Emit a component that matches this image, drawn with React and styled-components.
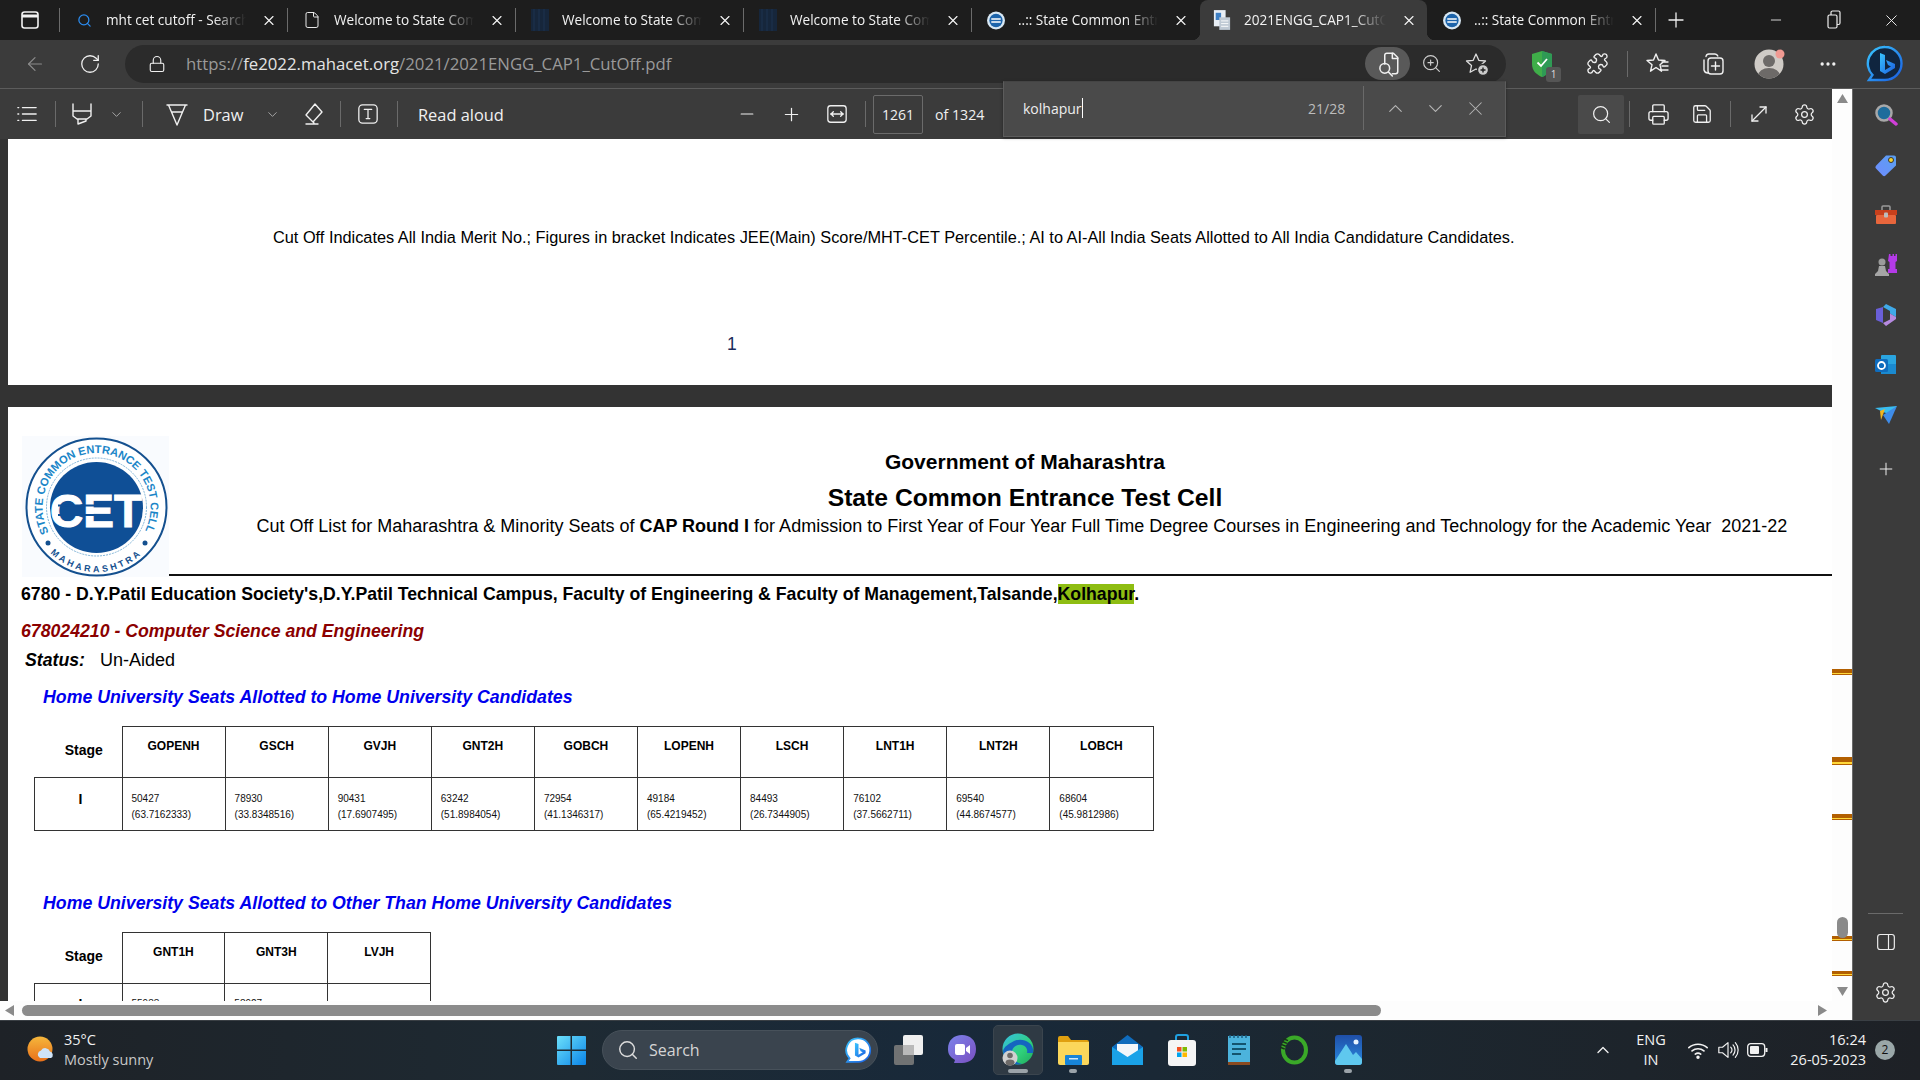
import React from 'react';
import styled, { createGlobalStyle } from 'styled-components';
import { X, Plus, Minus, ArrowLeft, RotateCw, Lock, Search, Printer, Save, MoveDiagonal, Settings, ChevronDown, ChevronUp, ZoomIn, Puzzle, File, Ellipsis } from 'lucide-react';

const GlobalStyle = createGlobalStyle`
  html, body { margin: 0; padding: 0; overflow: hidden; background: #3b3b3b; }
  * { box-sizing: border-box; }
`;

const UI = `"Open Sans", "Noto Sans", sans-serif`;
const PDF = `"Liberation Sans", Arial, sans-serif`;

const Screen = styled.div`
  width: 1920px;
  height: 1080px;
  display: flex;
  flex-direction: column;
  font-family: ${UI};
  color: #eee;
  overflow: hidden;
  position: relative;
`;

/* tab strip */
const TabStrip = styled.div`
  height: 40px;
  flex: none;
  display: flex;
  align-items: center;
  background: #1d1d1d;
`;
const TabSep = styled.div`
  width: 1px;
  height: 24px;
  background: ${(p) => (p.$hide ? 'transparent' : '#6b6b6b')};
  flex: none;
`;
const TabBox = styled.div`
  width: 227px;
  height: 40px;
  flex: none;
  display: flex;
  align-items: center;
  padding: 0 10px 0 ${(p) => (p.$active ? 13 : 15)}px;
  position: relative;
  background: ${(p) => (p.$active ? '#3b3b3b' : 'transparent')};
  border-radius: ${(p) => (p.$active ? '8px 8px 0 0' : '0')};
  &::before, &::after {
    content: ${(p) => (p.$active ? '""' : 'none')};
    position: absolute;
    bottom: 0;
    width: 8px;
    height: 8px;
  }
  &::before { left: -8px; background: radial-gradient(circle at 0 0, transparent 8px, #3b3b3b 8.5px); }
  &::after { right: -8px; background: radial-gradient(circle at 100% 0, transparent 8px, #3b3b3b 8.5px); }
`;
const TabIcon = styled.div`
  width: 18px;
  height: 22px;
  margin-right: 13px;
  display: flex;
  align-items: center;
  justify-content: center;
  flex: none;
`;
const TabLabel = styled.div`
  flex: 1;
  min-width: 0;
  margin-top: -2px;
  font-size: 13.6px;
  white-space: nowrap;
  overflow: hidden;
  color: #f2f2f2;
  -webkit-mask-image: linear-gradient(90deg, #000 72%, transparent 94%);
  mask-image: linear-gradient(90deg, #000 72%, transparent 94%);
`;
const TabClose = styled.div`
  width: 16px;
  margin-left: 6px;
  flex: none;
  display: flex;
  justify-content: center;
  color: #f6f6f6;
`;

/* generic slot that holds one icon at a fixed width */
const Slot = styled.div`
  width: ${(p) => p.$w || 40}px;
  height: ${(p) => p.$h || 36}px;
  margin-left: ${(p) => p.$ml || 0}px;
  flex: none;
  display: flex;
  align-items: center;
  justify-content: center;
  position: relative;
  color: ${(p) => p.$color || '#f0f0f0'};
  background: ${(p) => p.$bg || 'transparent'};
  border-radius: ${(p) => p.$r || 0}px;
`;
const Rule = styled.div`
  width: 1px;
  height: ${(p) => p.$h || 26}px;
  background: #6a6a6a;
  flex: none;
  margin-left: ${(p) => p.$ml || 0}px;
  margin-right: ${(p) => p.$mr || 0}px;
`;
const WindowControls = styled.div`
  margin-left: auto;
  display: flex;
`;

/* address row */
const AddressRow = styled.div`
  height: 49px;
  flex: none;
  display: flex;
  align-items: center;
  padding: 0 0 1px 15px;
  background: #3b3b3b;
  border-bottom: 1px solid #5c5c5c;
`;
const UrlPill = styled.div`
  width: 1381px;
  height: 38px;
  margin-left: 15px;
  flex: none;
  border-radius: 19px;
  background: #2b2b2b;
  display: flex;
  align-items: center;
  padding: 0 11px 0 22px;
`;
const UrlText = styled.div`
  margin-left: 19px;
  font-size: 16.75px;
  color: #9a9a9a;
  white-space: nowrap;
  b { font-weight: 400; color: #e4e4e4; }
`;
const PillIcons = styled.div`
  margin-left: auto;
  display: flex;
  align-items: center;
`;
const ShieldBadge = styled.div`
  position: absolute;
  left: 24px;
  top: 21px;
  width: 15px;
  height: 15px;
  border-radius: 3px;
  background: #555;
  color: #ddd;
  font-size: 10px;
  line-height: 15px;
  text-align: center;
`;

/* workspace */
const Workspace = styled.div`
  flex: 1;
  min-height: 0;
  display: flex;
`;
const ViewerArea = styled.div`
  flex: 1;
  min-width: 0;
  display: flex;
  flex-direction: column;
`;
const ViewerMain = styled.div`
  flex: 1;
  min-height: 0;
  display: flex;
`;
const PdfColumn = styled.div`
  flex: 1;
  min-width: 0;
  display: flex;
  flex-direction: column;
  position: relative;
`;
const Toolbar = styled.div`
  height: 50px;
  flex: none;
  display: flex;
  align-items: center;
  background: #3b3b3b;
  padding: 0 8px 0 7px;
`;
const ToolGroup = styled.div`
  display: flex;
  align-items: center;
  width: ${(p) => (p.$w ? `${p.$w}px` : 'auto')};
  margin-left: ${(p) => (p.$auto ? 'auto' : '0')};
`;
const ToolText = styled.div`
  font-size: ${(p) => p.$fs || 16.4}px;
  color: #f0f0f0;
  white-space: nowrap;
  margin-left: ${(p) => p.$ml || 0}px;
  width: ${(p) => (p.$w ? `${p.$w}px` : 'auto')};
`;
const PageInput = styled.div`
  width: 50px;
  height: 39px;
  margin-left: 7px;
  border: 1px solid #6b6b6b;
  border-radius: 2px;
  font-size: 14px;
  line-height: 37px;
  text-align: center;
  color: #f0f0f0;
`;
const FindBar = styled.div`
  position: absolute;
  left: 1003px;
  top: -8px;
  width: 503px;
  height: 56px;
  background: #4a4a4a;
  border: 1px solid #5c5c5c;
  border-top: 1px solid #444;
  box-shadow: 0 1px 3px rgba(0, 0, 0, 0.4);
  display: flex;
  align-items: center;
  padding: 0 0 2px 19px;
  z-index: 3;
`;
const FindInput = styled.div`
  width: 285px;
  font-size: 14px;
  color: #eee;
  display: flex;
  align-items: center;
`;
const Caret = styled.span`
  width: 1px;
  height: 20px;
  background: #fff;
  display: inline-block;
`;
const FindCount = styled.div`
  width: 55px;
  font-size: 14px;
  color: #bdbdbd;
  text-align: left;
`;

/* pages */
const Pages = styled.div`
  flex: 1;
  min-height: 0;
  overflow: hidden;
  background: #333;
  padding-left: 8px;
  font-family: ${PDF};
  color: #000;
`;
const Sheet = styled.div`
  background: #fff;
  padding-top: ${(p) => p.$pt || 0}px;
  height: ${(p) => (p.$h ? `${p.$h}px` : 'auto')};
  margin-bottom: ${(p) => p.$mb || 0}px;
`;
const Footnote = styled.div`
  margin-left: 265px;
  font-size: 16.32px;
  line-height: 22px;
  white-space: nowrap;
`;
const PageNum = styled.div`
  margin: 85px 0 0 719px;
  font-size: 17.5px;
  line-height: 22px;
  color: #1a2a5a;
`;
const HeadRow = styled.div`
  display: flex;
  margin-left: 14px;
  height: 141px;
`;
const LogoBox = styled.div`
  width: 147px;
  height: 141px;
  flex: none;
  background: #f9fbfe;
`;
const HeadText = styled.div`
  flex: 1;
  height: 140px;
  border-bottom: 2px solid #111;
  padding-left: 49px;
  text-align: center;
  padding-top: 14px;
`;
const GovLine = styled.div`
  font-size: 21px;
  font-weight: 700;
  line-height: 24px;
`;
const CellLine = styled.div`
  margin-top: 10px;
  font-size: 24.7px;
  font-weight: 700;
  line-height: 28px;
`;
const ListLine = styled.div`
  margin-top: 3px;
  padding-right: 6px;
  font-size: 18px;
  line-height: 22px;
  white-space: nowrap;
`;
const CollegeLine = styled.div`
  margin: 6px 0 0 13px;
  font-size: 17.69px;
  font-weight: 700;
  line-height: 22px;
  white-space: nowrap;
  mark { background: #8ebd12; color: #000; }
`;
const BranchLine = styled.div`
  margin: 15px 0 0 13px;
  font-size: 17.69px;
  font-weight: 700;
  font-style: italic;
  line-height: 22px;
  color: #8b0000;
`;
const StatusLine = styled.div`
  margin: 7px 0 0 17px;
  font-size: 18px;
  line-height: 22px;
  display: flex;
  b { font-size: 17.7px; font-style: italic; width: 75px; }
`;
const SeatHeading = styled.div`
  margin: ${(p) => p.$mt}px 0 0 35px;
  font-size: 17.74px;
  font-weight: 700;
  font-style: italic;
  line-height: 22px;
  color: #0000ee;
  white-space: nowrap;
`;
const CutTable = styled.table`
  margin: 18px 0 0 25.5px;
  border-collapse: collapse;
  table-layout: fixed;
  width: ${(p) => 88 + p.$cols * 103.2}px;
`;
const StageHead = styled.th`
  width: 88px;
  height: 51px;
  padding: 13px 0 0 12px;
  vertical-align: top;
  font-size: 14px;
  line-height: 20px;
  font-weight: 700;
  border-bottom: 1px solid #333;
  text-align: center;
`;
const ColHead = styled.th`
  border: 1px solid #333;
  padding: 12px 0 0;
  vertical-align: top;
  font-size: 12px;
  line-height: 14px;
  font-weight: 700;
  text-align: center;
`;
const StageCell = styled.td`
  height: 53px;
  border: 1px solid #333;
  padding: ${(p) => p.$pt}px 0 0 5px;
  vertical-align: top;
  font-size: 14px;
  font-weight: 700;
  line-height: 18px;
  text-align: center;
`;
const ValueCell = styled.td`
  border: 1px solid #333;
  padding: ${(p) => p.$pt}px 0 0 9px;
  vertical-align: top;
  font-size: 10px;
  line-height: 16px;
  color: #111;
`;

/* scroll bars */
const VScroll = styled.div`
  width: 20px;
  flex: none;
  position: relative;
  background: #fdfdfd;
`;
const ScrollMark = styled.div`
  position: absolute;
  left: 0;
  right: 0;
  top: ${(p) => p.$top}px;
  height: ${(p) => p.$h}px;
  background: linear-gradient(#b25f00 0 66%, #ffd83a 66% 84%, #b25f00 84%);
`;
const VThumb = styled.div`
  position: absolute;
  left: 5px;
  width: 11px;
  top: 828px;
  height: 21px;
  border-radius: 6px;
  background: #8a8a8a;
`;
const ArrowAt = styled.svg`
  position: absolute;
  left: ${(p) => p.$x}px;
  top: ${(p) => p.$y}px;
`;
const HScroll = styled.div`
  height: 19px;
  flex: none;
  background: #fdfdfd;
  display: flex;
  align-items: center;
  padding: 0 25px 0 5px;
`;
const HThumb = styled.div`
  width: 1359px;
  height: 11px;
  margin-left: 8px;
  margin-right: auto;
  border-radius: 6px;
  background: #8b8b8b;
`;

/* edge sidebar */
const Sidebar = styled.div`
  width: 68px;
  flex: none;
  display: flex;
  flex-direction: column;
  align-items: center;
  background: #3b3b3b;
  border-left: 1px solid #6a6a6a;
  padding: 1px 2px 3px 0;
`;
const SideItem = styled.div`
  width: 100%;
  height: 50px;
  margin-top: ${(p) => p.$mt || 0}px;
  flex: none;
  display: flex;
  align-items: center;
  justify-content: center;
  color: #eee;
`;
const SideBottom = styled.div`
  margin-top: auto;
  width: 100%;
  display: flex;
  flex-direction: column;
  align-items: center;
`;
const SideLine = styled.div`
  width: 35px;
  height: 1px;
  background: #6a6a6a;
  margin-bottom: 3px;
`;

/* taskbar */
const Taskbar = styled.div`
  height: 60px;
  flex: none;
  display: flex;
  align-items: center;
  padding-bottom: 1px;
  background: linear-gradient(90deg, #1e2227 0%, #1e2a33 30%, #18293a 50%, #1c2730 70%, #1e2126 100%);
  border-top: 1px solid #3a3f44;
`;
const Weather = styled.div`
  width: 557px;
  flex: none;
  display: flex;
  align-items: center;
  padding-left: 27px;
`;
const WeatherText = styled.div`
  margin-left: 9px;
  font-size: 14.5px;
  line-height: 20px;
  color: #f2f2f2;
  span { display: block; color: #c8c8c8; }
`;
const SearchPill = styled.div`
  width: 276px;
  height: 40px;
  margin-left: 16px;
  flex: none;
  border-radius: 20px;
  background: #3a444e;
  border: 1px solid #47515a;
  display: flex;
  align-items: center;
  padding: 0 5px 0 14px;
  color: #ddd;
`;
const SearchWord = styled.div`
  margin-left: 10px;
  font-size: 16px;
  color: #d5d5d5;
  flex: 1;
`;
const TaskSlot = styled.div`
  width: 50px;
  height: 50px;
  margin-left: ${(p) => p.$ml || 0}px;
  flex: none;
  display: flex;
  align-items: center;
  justify-content: center;
  position: relative;
  border-radius: 5px;
  background: ${(p) => (p.$active ? '#2f3a44' : 'transparent')};
  border: 1px solid ${(p) => (p.$active ? '#3b454e' : 'transparent')};
`;
const RunDot = styled.div`
  position: absolute;
  left: 50%;
  transform: translateX(-50%);
  bottom: 1px;
  width: ${(p) => (p.$wide ? 20 : 8)}px;
  height: 4px;
  border-radius: 2px;
  background: #9ba3a9;
`;
const Tray = styled.div`
  margin-left: auto;
  padding-right: 25px;
  display: flex;
  align-items: center;
  color: #f2f2f2;
`;
const LangBox = styled.div`
  width: 40px;
  margin-left: 15px;
  text-align: center;
  font-size: 14.5px;
  line-height: 20px;
`;
const ClockBox = styled.div`
  width: 90px;
  margin-left: 6px;
  text-align: right;
  font-size: 14.5px;
  line-height: 20px;
`;
const NotifyBadge = styled.div`
  width: 20px;
  height: 20px;
  margin-left: 9px;
  border-radius: 50%;
  background: #9aa7a8;
  color: #111;
  font-size: 12px;
  line-height: 20px;
  text-align: center;
`;

/* drawn icons */
const Svg = ({ s = 22, children, ...rest }) => (
  <svg width={s} height={s} viewBox="0 0 24 24" fill="none" stroke="currentColor" strokeWidth="1.4" strokeLinecap="round" strokeLinejoin="round" {...rest}>
    {children}
  </svg>
);
const WindowIcon = () => (
  <svg width="18" height="18" viewBox="0 0 18 18" fill="none" stroke="#f2f2f2" strokeWidth="1.6">
    <rect x="1" y="1" width="16" height="16" rx="2.5" />
    <path d="M1 5h16" strokeWidth="3" />
  </svg>
);
const RestoreIcon = () => (
  <svg width="14" height="20" viewBox="0 0 14 20" fill="none" stroke="#eee" strokeWidth="1.2">
    <rect x="1" y="5" width="9" height="13" rx="1.5" />
    <path d="M4 5V2.5A1.5 1.5 0 0 1 5.5 1H11.5A1.5 1.5 0 0 1 13 2.5V13a1.5 1.5 0 0 1-1.5 1.5H10" />
  </svg>
);
const Thumb = () => (
  <svg width="18" height="22" viewBox="0 0 18 22">
    <rect width="18" height="22" fill="#16263b" />
    <path d="M3 0v22M8 0v22M13 0v22" stroke="#1c3350" strokeWidth="1" />
  </svg>
);
const CetFav = () => (
  <svg width="19" height="19" viewBox="0 0 19 19">
    <circle cx="9.5" cy="9.5" r="9.5" fill="#d8e8f4" />
    <circle cx="9.5" cy="9.5" r="7" fill="#1c64ab" />
    <path d="M4.5 8h10M4.5 11h10" stroke="#fff" strokeWidth="1.6" />
  </svg>
);
const PdfFav = () => (
  <svg width="20" height="22" viewBox="0 0 20 22">
    <rect x="1" y="0" width="13" height="18" fill="#e8eef5" />
    <rect x="3" y="3" width="6" height="8" fill="#3d7fc4" />
    <rect x="7" y="8" width="12" height="14" fill="#bfc9d4" />
    <path d="M9 12h8M9 15h8M9 18h8" stroke="#fff" />
  </svg>
);
const Highlighter = () => (
  <Svg s={24}>
    <path d="M3 2v7h18V2M3 9v5l4 3h10l4-3V9M8 17v5l8-3v-2" />
  </Svg>
);
const DrawPen = () => (
  <Svg s={24}>
    <path d="M2 3h20M3.500 3 12 23l8.500-20M6.500 10h11" />
  </Svg>
);
const EraserIcon = () => (
  <Svg s={24}>
    <path d="M14 2l7 8-9 10-7-7zM7 15l6 6M5 22h12" />
  </Svg>
);
const TextBox = () => (
  <Svg s={22}>
    <rect x="2" y="2" width="20" height="20" rx="4" />
    <path d="M8 7h8M12 7v10M10 17h4" />
  </Svg>
);
const ListIcon = () => (
  <Svg s={22}>
    <path d="M7 5h15M7 12h15M7 19h15M2 5h1M2 12h1M2 19h1" />
  </Svg>
);
const FitWidth = () => (
  <Svg s={22}>
    <rect x="2" y="3" width="20" height="18" rx="3" />
    <path d="M5 12h14M8 9.5 5.5 12 8 14.5M16 9.5l2.5 2.5-2.5 2.5" />
  </Svg>
);
const ReaderIcon = () => (
  <Svg s={26}>
    <path d="M9 12V4a2 2 0 0 1 2-2h6l4 4v13a2 2 0 0 1-2 2h-3" />
    <path d="M16 2v5h5" />
    <circle cx="9" cy="16" r="4.5" />
    <path d="M12.5 19.5 16 23" />
  </Svg>
);
const StarPlus = () => (
  <svg width="24" height="24" viewBox="0 0 24 24" fill="none" stroke="#ddd" strokeWidth="1.3" strokeLinejoin="round">
    <path d="M11 2l2.8 6.3 6.7.7-5 4.6 1.4 6.7L11 17l-5.900 3.300 1.400-6.700L1.500 9l6.700-.7z" />
    <circle cx="18" cy="18" r="5.500" fill="#ccc" stroke="#2b2b2b" />
    <path d="M18 15.500v5M15.500 18h5" stroke="#222" strokeWidth="1.400" />
  </svg>
);
const FavList = () => (
  <Svg s={24}>
    <path d="M10 2l2.500 6 6.500.5-5 4.300 1.500 6.400L10 15.500l-5.500 3.700L6 12.800 1 8.500 7.500 8zM16 10h6M16 14h6M16 18h6" />
  </Svg>
);
const Collections = () => (
  <Svg s={24}>
    <path d="M5 4.500A3 3 0 0 1 8 2h6a3 3 0 0 1 2.800 2M3 8v10a4 4 0 0 0 4 3" />
    <rect x="7" y="6" width="15" height="16" rx="3" />
    <path d="M14.500 10v8M10.500 14h8" />
  </Svg>
);
const Shield = () => (
  <svg width="24" height="28" viewBox="0 0 24 28">
    <path d="M12 1 22 4v10c0 7-5 11-10 13C7 25 2 21 2 14V4z" fill="#3fae49" />
    <path d="M12 1 22 4v10c0 7-5 11-10 13z" fill="#2f9a55" />
    <path d="M7.500 12.500 11 16l6-7" stroke="#fff" strokeWidth="1.800" fill="none" />
  </svg>
);
const Avatar = () => (
  <svg width="34" height="30" viewBox="0 0 34 30">
    <defs><clipPath id="ava"><circle cx="16" cy="15" r="14.500" /></clipPath></defs>
    <circle cx="16" cy="15" r="14.500" fill="#cfcbc6" />
    <g clipPath="url(#ava)">
      <circle cx="16" cy="12" r="6" fill="#6d6a68" />
      <ellipse cx="16" cy="27" rx="11" ry="8" fill="#6d6a68" />
    </g>
    <circle cx="27" cy="5" r="4.500" fill="#f09a92" />
  </svg>
);
const BingBubble = ({ s = 38 }) => (
  <svg width={s} height={s} viewBox="0 0 38 38">
    <defs>
      <linearGradient id={`bb${s}`} x1="0" y1="0" x2="1" y2="1">
        <stop offset="0" stopColor="#39c5ff" />
        <stop offset="1" stopColor="#1a5de0" />
      </linearGradient>
    </defs>
    <path d="M19 2a16.500 16.500 0 0 1 0 33H3l3.500-5A16.500 16.500 0 0 1 19 2z" fill={s < 30 ? '#fff' : '#10253f'} stroke={`url(#bb${s})`} strokeWidth="2.400" />
    <path d="M14 8l5 2v15l6-3.500-3-1.500-2-5 9 4v4l-10 6-5-3z" fill={`url(#bb${s})`} />
  </svg>
);
const PanelIcon = () => (
  <Svg s={20}>
    <rect x="2" y="3" width="20" height="18" rx="3" />
    <path d="M15 3v18" />
  </Svg>
);

const Tag = () => (
  <svg width="24" height="24" viewBox="0 0 24 24">
    <defs><linearGradient id="tg" x1="0" y1="1" x2="1" y2="0"><stop offset="0" stopColor="#6f8cff" /><stop offset="1" stopColor="#5aa0f0" /></linearGradient></defs>
    <path d="M12 2.500h8a2 2 0 0 1 2 2v8L11.500 22.500a2 2 0 0 1-2.800 0L2 15.500a2 2 0 0 1 0-2.800z" fill="url(#tg)" />
    <circle cx="17" cy="7" r="2.500" fill="#f4d32c" stroke="#333" />
  </svg>
);
const Toolbox = () => (
  <svg width="24" height="22" viewBox="0 0 24 22">
    <path d="M8 6V3a1 1 0 0 1 1-1h6a1 1 0 0 1 1 1v3" stroke="#9a9a9a" strokeWidth="1.500" fill="none" />
    <rect x="1" y="6" width="22" height="5" fill="#c8401c" />
    <rect x="2" y="11" width="20" height="9" rx="1" fill="#e8663c" />
    <rect x="10" y="8.500" width="4" height="5" rx="1" fill="#bdbdbd" />
  </svg>
);
const Chess = () => (
  <svg width="24" height="24" viewBox="0 0 24 24">
    <path d="M16 2h1.500v2h2V2H21v2h1.500V2H24v7l-1.500 1v7H24v4h-9v-4h1.500v-7L15 9z" fill="#b43ae8" transform="translate(-1 -1)" />
    <circle cx="8" cy="9" r="3.500" fill="#9b9b9b" />
    <path d="M5 13h6l1 5 3 3v2H1v-2l3-3z" fill="#a5a5a5" />
  </svg>
);
const M365 = () => (
  <svg width="22" height="24" viewBox="0 0 22 24">
    <path d="M11 1 21 6v8l-6-3.500V8L8 4z" fill="#3fa9e8" />
    <path d="M1 6l7-2v16l-7-3z" fill="#6a5fd8" />
    <path d="M8 20l7-3.500v-6l6 3.500v2l-10 7z" fill="#b68ae0" />
  </svg>
);
const Outlook = () => (
  <svg width="24" height="24" viewBox="0 0 24 24">
    <rect x="7" y="2" width="15" height="19" rx="1" fill="#2aa5e0" />
    <path d="M7 11l15 0v10H7z" fill="#1a8ad0" />
    <rect x="1" y="6" width="13" height="13" rx="1.500" fill="#0f6cbd" />
    <circle cx="7.500" cy="12.500" r="3.500" fill="none" stroke="#fff" strokeWidth="1.800" />
  </svg>
);
const Paper = () => (
  <svg width="24" height="20" viewBox="0 0 24 20">
    <path d="M1 3l22-2-8 8-6-2z" fill="#39bdf0" />
    <path d="M23 1 15 19l-6-9z" fill="#3f8ce8" />
    <path d="M6 6l5-2-4 11z" fill="#f2b61f" />
  </svg>
);

const CetLogo = () => (
  <svg width="147" height="141" viewBox="0 0 147 141">
    <defs>
      <path id="arcTop" d="M26.8 96.4 A54 54 0 1 1 122.2 96.4" />
      <path id="arcBot" d="M28.5 117 A65 65 0 0 0 120.5 117" />
    </defs>
    <ellipse cx="74.5" cy="71" rx="70" ry="68.500" fill="#fff" stroke="#14508f" strokeWidth="2" />
    <ellipse cx="74.5" cy="71" rx="50" ry="49" fill="none" stroke="#7fb4d8" strokeWidth="1" strokeDasharray="2 1" />
    <text fontFamily={PDF} fontSize="11.2" fontWeight="700" fill="#1b86c8">
      <textPath href="#arcTop">STATE COMMON ENTRANCE TEST CELL</textPath>
    </text>
    <text fontFamily={PDF} fontSize="9" fontWeight="700" fill="#14508f" letterSpacing="2.8">
      <textPath href="#arcBot">MAHARASHTRA</textPath>
    </text>
    <circle cx="26" cy="107" r="2.500" fill="#14508f" />
    <circle cx="123" cy="107" r="2.500" fill="#14508f" />
    <ellipse cx="74.5" cy="71.500" rx="46.500" ry="45.500" fill="#0f4f96" />
    <text x="74" y="91" textAnchor="middle" fontFamily={PDF} fontSize="46" fontWeight="700" fill="#fff" stroke="#fff" strokeWidth="1">CET</text>
    <path d="M36 69.500h44M36 79h44" stroke="#0f4f96" strokeWidth="2" />
  </svg>
);

/* taskbar glyphs */
const WinLogo = () => (
  <svg width="29" height="29" viewBox="0 0 29 29">
    <defs><linearGradient id="wl" x1="0" y1="0" x2="1" y2="1"><stop offset="0" stopColor="#6ce0fa" /><stop offset="1" stopColor="#0a84e8" /></linearGradient></defs>
    <path d="M0 1a1 1 0 0 1 1-1h12.500v13.500H0zM15 0h13a1 1 0 0 1 1 1v12.500H15zM0 15h13.500v14H1a1 1 0 0 1-1-1zM15 15h14v13a1 1 0 0 1-1 1H15z" fill="url(#wl)" />
  </svg>
);
const WeatherIcon = () => (
  <svg width="28" height="28" viewBox="0 0 28 28">
    <defs><linearGradient id="sun" x1="0" y1="0" x2="0" y2="1"><stop offset="0" stopColor="#f6b73c" /><stop offset="1" stopColor="#e8701a" /></linearGradient></defs>
    <circle cx="13" cy="13" r="12.500" fill="url(#sun)" />
    <path d="M13 22a4 4 0 0 1 1-7.500 5 5 0 0 1 9 1 3.500 3.500 0 0 1 1 6.500z" fill="#cfe3f7" />
  </svg>
);
const TaskView = () => (
  <svg width="31" height="32" viewBox="0 0 31 32">
    <rect x="10" y="1" width="20" height="20" rx="2" fill="#efefef" />
    <rect x="1" y="11" width="20" height="20" rx="2" fill="#7a7a7a" opacity="0.900" />
    <rect x="10" y="11" width="11" height="10" fill="#b9b9b9" />
  </svg>
);
const Teams = () => (
  <svg width="30" height="32" viewBox="0 0 30 32">
    <defs><linearGradient id="tm" x1="0" y1="0" x2="1" y2="1"><stop offset="0" stopColor="#7b83eb" /><stop offset="1" stopColor="#7a4fc0" /></linearGradient></defs>
    <path d="M15 1c8 0 14 5 14 14s-6 14-14 14H7l1-3C3 23 1 20 1 15 1 6 7 1 15 1z" fill="url(#tm)" />
    <rect x="8" y="10" width="10" height="11" rx="2" fill="#fff" />
    <path d="M19 14l4-3v9l-4-3z" fill="#fff" />
  </svg>
);
const EdgeLogo = () => (
  <svg width="32" height="34" viewBox="0 0 32 34">
    <defs>
      <linearGradient id="ed" x1="0" y1="0" x2="1" y2="1"><stop offset="0" stopColor="#36c0e8" /><stop offset="0.600" stopColor="#2fd07a" /><stop offset="1" stopColor="#1fa85c" /></linearGradient>
    </defs>
    <circle cx="16" cy="16" r="15.500" fill="url(#ed)" />
    <path d="M1 18C2 29 12 33 20 31c-6-1-11-6-10-13 1-5 6-7 10-6 4 1 6 4 5 8h6C33 9 20 4 12 8 6 11 2 14 1 18z" fill="#1565c0" />
    <circle cx="8" cy="25" r="7.500" fill="#d0d0d0" />
    <circle cx="8" cy="22.500" r="2.800" fill="#6d6a68" />
    <ellipse cx="8" cy="29.500" rx="4.500" ry="3" fill="#6d6a68" />
  </svg>
);
const Folder = () => (
  <svg width="31" height="30" viewBox="0 0 31 30">
    <path d="M0 3a2 2 0 0 1 2-2h8l3 4h16a2 2 0 0 1 2 2v3H0z" fill="#e0a010" />
    <path d="M0 7h31v21a2 2 0 0 1-2 2H2a2 2 0 0 1-2-2z" fill="#fbd75b" />
    <rect x="7" y="20" width="17" height="10" rx="1" fill="#1784d8" />
    <rect x="11" y="23" width="9" height="1.500" fill="#cde8fb" />
  </svg>
);
const Mail = () => (
  <svg width="31" height="30" viewBox="0 0 31 30">
    <path d="M0 12 15.500 0 31 12v18H0z" fill="#0f6cbd" />
    <path d="M5 9h21v8l-10.500 7L5 17z" fill="#f2f6fa" />
    <path d="M0 12l15.500 10L31 12v18H0z" fill="#1aa2e8" />
  </svg>
);
const Store = () => (
  <svg width="30" height="32" viewBox="0 0 30 32">
    <path d="M9 6V3a2 2 0 0 1 2-2h8a2 2 0 0 1 2 2v3" stroke="#1fa0e0" strokeWidth="2" fill="none" />
    <rect x="1" y="6" width="28" height="26" rx="3" fill="#f5f5f5" />
    <rect x="10" y="13" width="4.500" height="4.500" fill="#f25022" />
    <rect x="15.500" y="13" width="4.500" height="4.500" fill="#7fba00" />
    <rect x="10" y="18.500" width="4.500" height="4.500" fill="#00a4ef" />
    <rect x="15.500" y="18.500" width="4.500" height="4.500" fill="#ffb900" />
  </svg>
);
const Notepad = () => (
  <svg width="22" height="30" viewBox="0 0 22 30">
    <rect x="0" y="1" width="22" height="29" fill="#4cb3dc" />
    <rect x="0" y="27" width="22" height="3" fill="#8a4a20" />
    <path d="M2 0v3M6 0v3M10 0v3M14 0v3M18 0v3" stroke="#1a5e80" strokeWidth="1.500" />
    <path d="M4 9h14M4 14h14M4 19h9" stroke="#14546e" strokeWidth="2" />
  </svg>
);
const Ring = () => (
  <svg width="29" height="30" viewBox="0 0 29 30">
    <ellipse cx="14.500" cy="15" rx="11.500" ry="12.500" fill="none" stroke="#3aa928" strokeWidth="4" />
    <path d="M6 4 2 14" stroke="#17301a" strokeWidth="5" strokeDasharray="1.500 1.500" />
  </svg>
);
const Photos = () => (
  <svg width="27" height="30" viewBox="0 0 27 30">
    <defs><linearGradient id="ph" x1="0" y1="0" x2="0" y2="1"><stop offset="0" stopColor="#1f4fa8" /><stop offset="1" stopColor="#2a8ae0" /></linearGradient></defs>
    <rect width="27" height="30" rx="3" fill="url(#ph)" />
    <circle cx="21" cy="7" r="2.500" fill="#e6f3ff" />
    <path d="M0 26 11 9l7 11 3-3 6 7v3a3 3 0 0 1-3 3H3a3 3 0 0 1-3-3z" fill="#5fc8ee" />
  </svg>
);
const Wifi = () => (
  <Svg s={22} strokeWidth="1.800" color="#f2f2f2">
    <path d="M2 9.500a15 15 0 0 1 20 0M5.500 13a10 10 0 0 1 13 0M9 16.500a5 5 0 0 1 6 0" />
    <circle cx="12" cy="20" r="1" fill="currentColor" />
  </Svg>
);
const Speaker = () => (
  <Svg s={22} strokeWidth="1.300" color="#f2f2f2">
    <path d="M2 9v6h4l6 5V4L6 9zM15 9a4 4 0 0 1 0 6M17.500 6.500a8 8 0 0 1 0 11M20 4a12 12 0 0 1 0 16" />
  </Svg>
);
const Battery = () => (
  <svg width="21" height="14" viewBox="0 0 21 14">
    <rect x="0.700" y="0.700" width="17" height="12.600" rx="3" fill="none" stroke="#f2f2f2" strokeWidth="1.300" />
    <rect x="3" y="3" width="9" height="8" rx="1" fill="#f2f2f2" />
    <rect x="18.500" y="5" width="2" height="4" fill="#f2f2f2" />
  </svg>
);

const tabs = [
  { icon: <Search size={15} color="#2b8cf0" strokeWidth={2} />, label: 'mht cet cutoff - Search' },
  { icon: <File size={20} color="#f0f0f0" strokeWidth={1.3} />, label: 'Welcome to State Common' },
  { icon: <Thumb />, label: 'Welcome to State Common' },
  { icon: <Thumb />, label: 'Welcome to State Common' },
  { icon: <CetFav />, label: '..:: State Common Entrance' },
  { icon: <PdfFav />, label: '2021ENGG_CAP1_CutOff.pdf', active: true },
  { icon: <CetFav />, label: '..:: State Common Entrance' },
];

const homeCols = [
  ['GOPENH', '50427', '(63.7162333)'],
  ['GSCH', '78930', '(33.8348516)'],
  ['GVJH', '90431', '(17.6907495)'],
  ['GNT2H', '63242', '(51.8984054)'],
  ['GOBCH', '72954', '(41.1346317)'],
  ['LOPENH', '49184', '(65.4219452)'],
  ['LSCH', '84493', '(26.7344905)'],
  ['LNT1H', '76102', '(37.5662711)'],
  ['LNT2H', '69540', '(44.8674577)'],
  ['LOBCH', '68604', '(45.9812986)'],
];
const otherCols = [
  ['GNT1H', '55933', '(58.2310448)'],
  ['GNT3H', '58927', '(55.9021733)'],
  ['LVJH', '', ''],
];
const marks = [
  [580, 6],
  [668, 8],
  [725, 6],
  [847, 5],
  [882, 5],
];

function Cutoffs({ cols, valueTop = 13 }) {
  return (
    <CutTable $cols={cols.length}>
      <thead>
        <tr>
          <StageHead>Stage</StageHead>
          {cols.map((c) => <ColHead key={c[0]}>{c[0]}</ColHead>)}
        </tr>
      </thead>
      <tbody>
        <tr>
          <StageCell $pt={valueTop - 1}>I</StageCell>
          {cols.map((c) => (
            <ValueCell key={c[0]} $pt={valueTop}>{c[1]}<br />{c[2]}</ValueCell>
          ))}
        </tr>
      </tbody>
    </CutTable>
  );
}

export default function App() {
  return (
    <Screen>
      <GlobalStyle />
      <TabStrip>
        <Slot $w={59}><WindowIcon /></Slot>
        <TabSep />
        {tabs.map((t, i) => (
          <React.Fragment key={i}>
            <TabBox $active={t.active}>
              <TabIcon>{t.icon}</TabIcon>
              <TabLabel>{t.label}</TabLabel>
              <TabClose><X size={17} strokeWidth={1.7} /></TabClose>
            </TabBox>
            <TabSep $hide={i === 4 || i === 5} />
          </React.Fragment>
        ))}
        <Slot $w={40}><Plus size={24} strokeWidth={1.3} /></Slot>
        <WindowControls>
          <Slot $w={57.5}><Minus size={16} strokeWidth={1.3} /></Slot>
          <Slot $w={57.5}><RestoreIcon /></Slot>
          <Slot $w={57.5}><X size={19} strokeWidth={1.2} /></Slot>
        </WindowControls>
      </TabStrip>

      <AddressRow>
        <Slot $color="#8c8c8c"><ArrowLeft size={22} strokeWidth={1.3} /></Slot>
        <Slot $ml={15}><RotateCw size={22} strokeWidth={1.4} /></Slot>
        <UrlPill>
          <Slot $w={20}><Lock size={18} strokeWidth={1.5} /></Slot>
          <UrlText>https://<b>fe2022.mahacet.org</b>/2021/2021ENGG_CAP1_CutOff.pdf</UrlText>
          <PillIcons>
            <Slot $w={45} $h={33} $r={17} $bg="#595959"><ReaderIcon /></Slot>
            <Slot $w={36} $ml={3} $color="#cfcfcf"><ZoomIn size={21} strokeWidth={1.3} /></Slot>
            <Slot $w={36} $ml={10}><StarPlus /></Slot>
          </PillIcons>
        </UrlPill>
        <Slot $ml={16}>
          <Shield />
          <ShieldBadge>1</ShieldBadge>
        </Slot>
        <Slot $ml={15}><Puzzle size={23} strokeWidth={1.4} /></Slot>
        <Rule $h={26} $ml={10} />
        <Slot $ml={10}><FavList /></Slot>
        <Slot $ml={15}><Collections /></Slot>
        <Slot $ml={17}><Avatar /></Slot>
        <Slot $ml={18}><Ellipsis size={20} strokeWidth={2} /></Slot>
        <Slot $w={44} $h={40} $ml={15}><BingBubble /></Slot>
      </AddressRow>

      <Workspace>
        <ViewerArea>
          <ViewerMain>
            <PdfColumn>
              <Toolbar>
                <ToolGroup $w={720}>
                  <Slot><ListIcon /></Slot>
                  <Rule $ml={8} $mr={6} />
                  <Slot><Highlighter /></Slot>
                  <Slot $w={28} $color="#bbb"><ChevronDown size={15} strokeWidth={1.3} /></Slot>
                  <Rule $ml={12} $mr={14} />
                  <Slot><DrawPen /></Slot>
                  <ToolText $ml={6} $w={40}>Draw</ToolText>
                  <Slot $w={28} $ml={15} $color="#bbb"><ChevronDown size={15} strokeWidth={1.3} /></Slot>
                  <Slot $ml={7}><EraserIcon /></Slot>
                  <Rule $ml={7} $mr={7} />
                  <Slot><TextBox /></Slot>
                  <Rule $ml={9} />
                  <ToolText $ml={20}>Read aloud</ToolText>
                </ToolGroup>
                <ToolGroup>
                  <Slot><Minus size={20} strokeWidth={1.4} /></Slot>
                  <Slot $ml={4}><Plus size={21} strokeWidth={1.4} /></Slot>
                  <Slot $ml={6}><FitWidth /></Slot>
                  <Rule $ml={8} />
                  <PageInput>1261</PageInput>
                  <ToolText $ml={12} $fs={14.2}>of 1324</ToolText>
                </ToolGroup>
                <ToolGroup $auto>
                  <Slot $w={46} $h={39} $r={2} $bg="#4a4a4a"><Search size={21} strokeWidth={1.4} /></Slot>
                  <Rule $ml={5} $mr={8} />
                  <Slot><Printer size={23} strokeWidth={1.4} /></Slot>
                  <Slot $ml={4}><Save size={22} strokeWidth={1.4} /></Slot>
                  <Rule $ml={8} $mr={8} />
                  <Slot><MoveDiagonal size={24} strokeWidth={1.3} /></Slot>
                  <Slot $ml={5}><Settings size={23} strokeWidth={1.3} /></Slot>
                </ToolGroup>
              </Toolbar>

              <FindBar>
                <FindInput>kolhapur<Caret /></FindInput>
                <FindCount>21/28</FindCount>
                <Rule $h={44} />
                <Slot $ml={11} $color="#b5b5b5"><ChevronUp size={23} strokeWidth={1.2} /></Slot>
                <Slot $color="#b5b5b5"><ChevronDown size={23} strokeWidth={1.2} /></Slot>
                <Slot $w={40} $color="#b5b5b5"><X size={23} strokeWidth={1.1} /></Slot>
              </FindBar>

              <Pages>
                <Sheet $h={246} $pt={87} $mb={22}>
                  <Footnote>Cut Off Indicates All India Merit No.; Figures in bracket Indicates JEE(Main) Score/MHT-CET Percentile.; AI to AI-All India Seats Allotted to All India Candidature Candidates.</Footnote>
                  <PageNum>1</PageNum>
                </Sheet>
                <Sheet $pt={29}>
                  <HeadRow>
                    <LogoBox><CetLogo /></LogoBox>
                    <HeadText>
                      <GovLine>Government of Maharashtra</GovLine>
                      <CellLine>State Common Entrance Test Cell</CellLine>
                      <ListLine>Cut Off List for Maharashtra &amp; Minority Seats of <b>CAP Round I</b> for Admission to First Year of Four Year Full Time Degree Courses in Engineering and Technology for the Academic Year&nbsp; 2021-22</ListLine>
                    </HeadText>
                  </HeadRow>
                  <CollegeLine>6780 - D.Y.Patil Education Society's,D.Y.Patil Technical Campus, Faculty of Engineering &amp; Faculty of Management,Talsande,<mark>Kolhapur</mark>.</CollegeLine>
                  <BranchLine>678024210 - Computer Science and Engineering</BranchLine>
                  <StatusLine><b>Status:</b> Un-Aided</StatusLine>
                  <SeatHeading $mt={15}>Home University Seats Allotted to Home University Candidates</SeatHeading>
                  <Cutoffs cols={homeCols} />
                  <SeatHeading $mt={61}>Home University Seats Allotted to Other Than Home University Candidates</SeatHeading>
                  <Cutoffs cols={otherCols} valueTop={12} />
                </Sheet>
              </Pages>
            </PdfColumn>
            <VScroll>
              <ArrowAt $x={5} $y={5} width="11" height="9" viewBox="0 0 11 9"><path d="M5.500 0 11 9H0z" fill="#8a8a8a" /></ArrowAt>
              {marks.map(([top, h]) => <ScrollMark key={top} $top={top} $h={h} />)}
              <VThumb />
              <ArrowAt $x={5} $y={898} width="11" height="9" viewBox="0 0 11 9"><path d="M5.500 9 11 0H0z" fill="#8a8a8a" /></ArrowAt>
            </VScroll>
          </ViewerMain>
          <HScroll>
            <svg width="9" height="11" viewBox="0 0 9 11"><path d="M0 5.500 9 0v11z" fill="#8a8a8a" /></svg>
            <HThumb />
            <svg width="9" height="11" viewBox="0 0 9 11"><path d="M9 5.500 0 0v11z" fill="#8a8a8a" /></svg>
          </HScroll>
        </ViewerArea>

        <Sidebar>
          <SideItem>
            <svg width="24" height="24" viewBox="0 0 24 24">
              <circle cx="10" cy="10" r="7.500" fill="#1e6c9c" stroke="#a8a8a8" strokeWidth="2.500" />
              <path d="M16 16l6 5" stroke="#d13fd8" strokeWidth="3.500" strokeLinecap="round" />
            </svg>
          </SideItem>
          <SideItem><Tag /></SideItem>
          <SideItem><Toolbox /></SideItem>
          <SideItem><Chess /></SideItem>
          <SideItem><M365 /></SideItem>
          <SideItem><Outlook /></SideItem>
          <SideItem><Paper /></SideItem>
          <SideItem $mt={4}><Plus size={20} strokeWidth={1.2} /></SideItem>
          <SideBottom>
            <SideLine />
            <SideItem><PanelIcon /></SideItem>
            <SideItem><Settings size={23} strokeWidth={1.3} /></SideItem>
          </SideBottom>
        </Sidebar>
      </Workspace>

      <Taskbar>
        <Weather>
          <WeatherIcon />
          <WeatherText>35°C<span>Mostly sunny</span></WeatherText>
        </Weather>
        <WinLogo />
        <SearchPill>
          <Search size={22} strokeWidth={1.6} />
          <SearchWord>Search</SearchWord>
          <BingBubble s={27} />
        </SearchPill>
        <TaskSlot $ml={5}><TaskView /></TaskSlot>
        <TaskSlot $ml={4}><Teams /></TaskSlot>
        <TaskSlot $ml={6} $active><EdgeLogo /><RunDot $wide /></TaskSlot>
        <TaskSlot $ml={5}><Folder /><RunDot /></TaskSlot>
        <TaskSlot $ml={4}><Mail /></TaskSlot>
        <TaskSlot $ml={5}><Store /></TaskSlot>
        <TaskSlot $ml={7}><Notepad /></TaskSlot>
        <TaskSlot $ml={5}><Ring /></TaskSlot>
        <TaskSlot $ml={4}><Photos /><RunDot /></TaskSlot>
        <Tray>
          <Slot $w={26}><ChevronUp size={20} strokeWidth={1.6} /></Slot>
          <LangBox>ENG<br />IN</LangBox>
          <Slot $w={26} $ml={14}><Wifi /></Slot>
          <Slot $w={26} $ml={4}><Speaker /></Slot>
          <Slot $w={26} $ml={3}><Battery /></Slot>
          <ClockBox>16:24<br />26-05-2023</ClockBox>
          <NotifyBadge>2</NotifyBadge>
        </Tray>
      </Taskbar>
    </Screen>
  );
}
